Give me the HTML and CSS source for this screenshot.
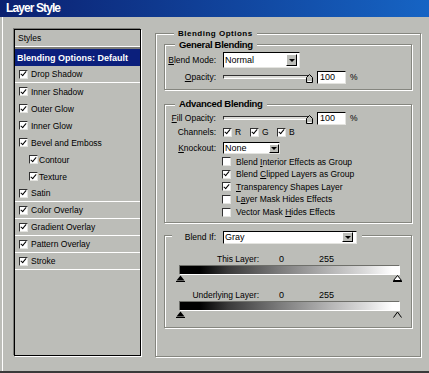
FILE: index.html
```html
<!DOCTYPE html>
<html lang="en">
<head>
    <meta charset="UTF-8">
    <meta name="viewport" content="width=device-width, initial-scale=1.0">
    <title>Layer Style</title>
    <link rel="stylesheet" href="styles.css">
</head>
<body>
    <div class="window">
        <div class="titlebar">Layer Style</div>
        <div class="main">
            <div class="styles-list">
                <div class="list-head">Styles</div>
                <div class="list-item selected">Blending Options: Default</div>
                <div class="list-item sep"><span class="cb on"></span>Drop Shadow</div>
                <div class="list-item"><span class="cb on"></span>Inner Shadow</div>
                <div class="list-item"><span class="cb on"></span>Outer Glow</div>
                <div class="list-item"><span class="cb on"></span>Inner Glow</div>
                <div class="list-item"><span class="cb on"></span>Bevel and Emboss</div>
                <div class="list-item sub"><span class="cb on"></span>Contour</div>
                <div class="list-item sub"><span class="cb on"></span>Texture</div>
                <div class="list-item sep"><span class="cb on"></span>Satin</div>
                <div class="list-item sep"><span class="cb on"></span>Color Overlay</div>
                <div class="list-item sep"><span class="cb on"></span>Gradient Overlay</div>
                <div class="list-item sep"><span class="cb on"></span>Pattern Overlay</div>
                <div class="list-item sep"><span class="cb on"></span>Stroke</div>
            </div>

            <div class="group outer">
                <div class="legend legend-top">Blending Options</div>

                <div class="group general">
                    <div class="legend">General Blending</div>
                    <div class="row mode-row">
                        <span class="lbl"><u>B</u>lend Mode:</span>
                        <div class="select mode-select">
                            <span>Normal</span>
                            <span class="btn"></span>
                        </div>
                    </div>
                    <div class="row slider-row">
                        <span class="lbl"><u>O</u>pacity:</span>
                        <div class="slider">
                            <div class="track"></div>
                            <svg class="thumb" width="7" height="9" viewBox="0 0 7 9">
                                <polygon points="3.5,0.5 6.5,3.5 6.5,8.5 0.5,8.5 0.5,3.5" fill="#bcbdb8" stroke="#000" stroke-width="1"/>
                                <line x1="1.5" y1="7.5" x2="5.5" y2="7.5" stroke="#fff"/>
                            </svg>
                        </div>
                        <div class="num">100</div>
                        <span class="pct">%</span>
                    </div>
                </div>

                <div class="group advanced">
                    <div class="legend">Advanced Blending</div>
                    <div class="row slider-row fill-row">
                        <span class="lbl"><u>F</u>ill Opacity:</span>
                        <div class="slider">
                            <div class="track"></div>
                            <svg class="thumb" width="7" height="9" viewBox="0 0 7 9">
                                <polygon points="3.5,0.5 6.5,3.5 6.5,8.5 0.5,8.5 0.5,3.5" fill="#bcbdb8" stroke="#000" stroke-width="1"/>
                                <line x1="1.5" y1="7.5" x2="5.5" y2="7.5" stroke="#fff"/>
                            </svg>
                        </div>
                        <div class="num">100</div>
                        <span class="pct">%</span>
                    </div>
                    <div class="row channels-row">
                        <span class="lbl">Channels:</span>
                        <span class="channel"><span class="cb on"></span>R</span>
                        <span class="channel"><span class="cb on"></span>G</span>
                        <span class="channel"><span class="cb on"></span>B</span>
                    </div>
                    <div class="row knockout-row">
                        <span class="lbl"><u>K</u>nockout:</span>
                        <div class="select knock-select">
                            <span>None</span>
                            <span class="btn"></span>
                        </div>
                    </div>
                    <div class="options">
                        <div class="opt"><span class="cb"></span><span>Blend <u>I</u>nterior Effects as Group</span></div>
                        <div class="opt"><span class="cb on"></span><span>Blend <u>C</u>lipped Layers as Group</span></div>
                        <div class="opt"><span class="cb on"></span><span><u>T</u>ransparency Shapes Layer</span></div>
                        <div class="opt"><span class="cb"></span><span>L<u>a</u>yer Mask Hides Effects</span></div>
                        <div class="opt"><span class="cb"></span><span>Vector Mask <u>H</u>ides Effects</span></div>
                    </div>
                </div>

                <div class="group blendif">
                    <div class="legend legend-select">
                        <span class="lbl">Blend If:</span>
                        <div class="select gray-select">
                            <span>Gray</span>
                            <span class="btn"></span>
                        </div>
                    </div>

                    <div class="range-row">
                        <span class="range-lbl">This Layer:</span>
                        <span class="v0">0</span>
                        <span>255</span>
                    </div>
                    <div class="ramp"></div>
                    <div class="handles">
                        <svg width="9" height="7" viewBox="0 0 9 7"><polygon points="4.5,0.5 8.5,5.5 0.5,5.5" fill="#000"/><line x1="0" y1="6.5" x2="9" y2="6.5" stroke="#000"/></svg>
                        <svg width="9" height="7" viewBox="0 0 9 7"><polygon points="4.5,0.5 8.5,5.5 0.5,5.5" fill="#fff" stroke="#000"/><line x1="0" y1="6.5" x2="9" y2="6.5" stroke="#000"/></svg>
                    </div>

                    <div class="range-row second">
                        <span class="range-lbl">Underlying Layer:</span>
                        <span class="v0">0</span>
                        <span>255</span>
                    </div>
                    <div class="ramp"></div>
                    <div class="handles">
                        <svg width="9" height="7" viewBox="0 0 9 7"><polygon points="4.5,0.5 8.5,5.5 0.5,5.5" fill="#000"/><line x1="0" y1="6.5" x2="9" y2="6.5" stroke="#000"/></svg>
                        <svg width="9" height="7" viewBox="0 0 9 7"><polyline points="0.5,6.5 4.5,1 8.5,6.5" fill="none" stroke="#000"/></svg>
                    </div>
                </div>
            </div>
        </div>
    </div>
</body>
</html>
```

FILE: styles.css
```css
* {
    box-sizing: border-box;
}
html, body {
    margin: 0;
    padding: 0;
    background: #bcbdb8;
    font-family: "Liberation Sans", Arial, sans-serif;
    font-size: 8.5px;
    color: #000;
}
.window {
    width: 429px;
    height: 373px;
    background: #bcbdb8;
    display: flex;
    flex-direction: column;
    border-bottom: 2px solid #3a3a3a;
    overflow: hidden;
}
.titlebar {
    height: 17px;
    line-height: 17px;
    padding-left: 6px;
    background: linear-gradient(90deg, #0b2070, #1664c4);
    color: #fff;
    font-size: 12px;
    font-weight: bold;
    letter-spacing: -0.9px;
}
.main {
    flex: 1;
    display: flex;
    align-items: flex-start;
    margin-left: 2px;
    border-left: 1px solid #fff;
    padding: 12px 0 0 11px;
}

/* styles list */
.styles-list {
    width: 127px;
    height: 327px;
    border: 1px solid #000;
    box-shadow: -1px -1px 0 #7c7d79, 1px 1px 0 #fff;
}
.list-head {
    height: 19px;
    line-height: 16px;
    padding-left: 3px;
    border-bottom: 2px solid #7c7d79;
    box-shadow: inset 0 -1px 0 #fff;
}
.list-item {
    height: 17px;
    display: flex;
    align-items: center;
    gap: 3px;
    padding-left: 4px;
}
.list-item.sep {
    border-bottom: 1px solid #fff;
}
.list-item.sub {
    padding-left: 14px;
    gap: 1px;
}
.list-item.selected {
    background: #0b1f7c;
    color: #fff;
    font-weight: bold;
    font-size: 9px;
    padding-left: 2px;
}

/* checkbox */
.cb {
    width: 9px;
    height: 9px;
    flex-shrink: 0;
    background: #fff;
    border: 1px solid;
    border-color: #303030 #e4e4e0 #e4e4e0 #303030;
    display: flex;
    align-items: center;
    justify-content: center;
}
.cb.on::after {
    content: "";
    width: 2px;
    height: 5px;
    border: solid #000;
    border-width: 0 1.5px 1.5px 0;
    transform: translate(0, -1px) rotate(40deg);
}

/* group boxes */
.group {
    border: 1px solid #85867f;
    box-shadow: inset 1px 1px 0 #fff, 1px 1px 0 #fff;
    display: flex;
    flex-direction: column;
}
.outer {
    margin: 4px 0 0 14px;
    width: 266px;
    height: 324px;
    padding: 0 8px;
}
.legend {
    align-self: flex-start;
    height: 12px;
    line-height: 12px;
    margin: -6px 0 0 10px;
    padding: 0 4px;
    background: #bcbdb8;
    font-weight: bold;
    font-size: 9.5px;
    letter-spacing: -0.3px;
}
.legend-top {
    height: 11px;
    line-height: 11px;
    font-size: 8px;
    letter-spacing: 0.5px;
}
.general {
    margin-top: 5px;
    padding-bottom: 5px;
}
.advanced {
    margin-top: 14px;
    padding-bottom: 3.6px;
}
.advanced .legend {
    margin-top: -7px;
}
.blendif {
    margin-top: 12px;
    height: 93px;
}

/* rows */
.row {
    display: flex;
    align-items: center;
}
.lbl {
    width: 51px;
    margin-right: 7px;
    text-align: right;
    white-space: nowrap;
}
.mode-row {
    height: 16px;
    margin-top: 1px;
}
.slider-row {
    height: 14px;
    margin-top: 2px;
}
.fill-row {
    margin-top: 1px;
}
.channels-row {
    height: 12px;
    margin-top: 1px;
}
.knockout-row {
    height: 12px;
    margin-top: 4px;
}

/* dropdowns */
.select {
    display: flex;
    align-items: center;
    justify-content: space-between;
    background: #fff;
    border: 1px solid;
    border-color: #000 #e4e4e0 #e4e4e0 #000;
    padding-left: 1px;
    font-size: 9px;
}
.select .btn {
    width: 11px;
    height: 12px;
    margin-right: 2px;
    background: #bcbdb8;
    border: 1px solid;
    border-color: #fff #000 #000 #fff;
    display: flex;
    align-items: center;
    justify-content: center;
}
.select .btn::after {
    content: "";
    border-left: 3px solid transparent;
    border-right: 3px solid transparent;
    border-top: 3px solid #000;
}
.mode-select {
    width: 77px;
    height: 16px;
}
.knock-select {
    width: 57px;
    height: 12px;
}
.knock-select .btn {
    width: 10px;
    height: 9px;
    margin-right: 0;
}
.gray-select {
    width: 134px;
    height: 13px;
    font-weight: normal;
    letter-spacing: 0;
}
.gray-select .btn {
    height: 10px;
    margin-right: 3px;
}

/* sliders */
.slider {
    position: relative;
    width: 90px;
    height: 14px;
    display: flex;
    align-items: center;
}
.track {
    width: 88px;
    height: 4px;
    background: #dcdcd8;
    border: 1px solid;
    border-color: #303030 #fff #fff #303030;
}
.thumb {
    position: absolute;
    right: 0;
    top: 4px;
}
.num {
    width: 29px;
    height: 13px;
    margin-left: 4px;
    padding-left: 2px;
    line-height: 11px;
    font-size: 9px;
    background: #fff;
    border: 1px solid;
    border-color: #000 #e4e4e0 #e4e4e0 #000;
}
.pct {
    margin-left: 4px;
}
.channel {
    display: flex;
    align-items: center;
    gap: 3px;
    width: 27px;
}

/* advanced checkboxes */
.options {
    margin-top: 1.4px;
}
.opt {
    height: 12.6px;
    display: flex;
    align-items: center;
    gap: 5px;
    padding-left: 57px;
    white-space: nowrap;
}

/* blend if */
.legend-select {
    display: flex;
    align-items: center;
    height: 13px;
    margin: -5px 0 0 7px;
    padding: 0 5px 0 0;
    font-weight: normal;
    font-size: 8.5px;
    letter-spacing: 0;
}
.legend-select .lbl {
    width: 44px;
}
.range-row {
    display: flex;
    height: 12px;
    line-height: 12px;
    margin-top: 9px;
    font-size: 9px;
}
.range-row.second {
    margin-top: 7px;
}
.range-lbl {
    width: 94px;
    text-align: right;
    font-size: 8.5px;
}
.v0 {
    width: 40px;
    margin-left: 20px;
}
.ramp {
    width: 221px;
    height: 10px;
    margin-left: 14px;
    border: 1px solid;
    border-color: #6e6f6a #fff #fff #6e6f6a;
    background: linear-gradient(90deg, #000 0%, #000 9%, #3a3a3a 22%, #7a7a7a 45%, #b4b4b4 68%, #dcdcdc 85%, #fff 97%);
}
.handles {
    display: flex;
    justify-content: space-between;
    width: 226px;
    height: 7px;
    margin-left: 11px;
}
.handles svg {
    display: block;
}
```
